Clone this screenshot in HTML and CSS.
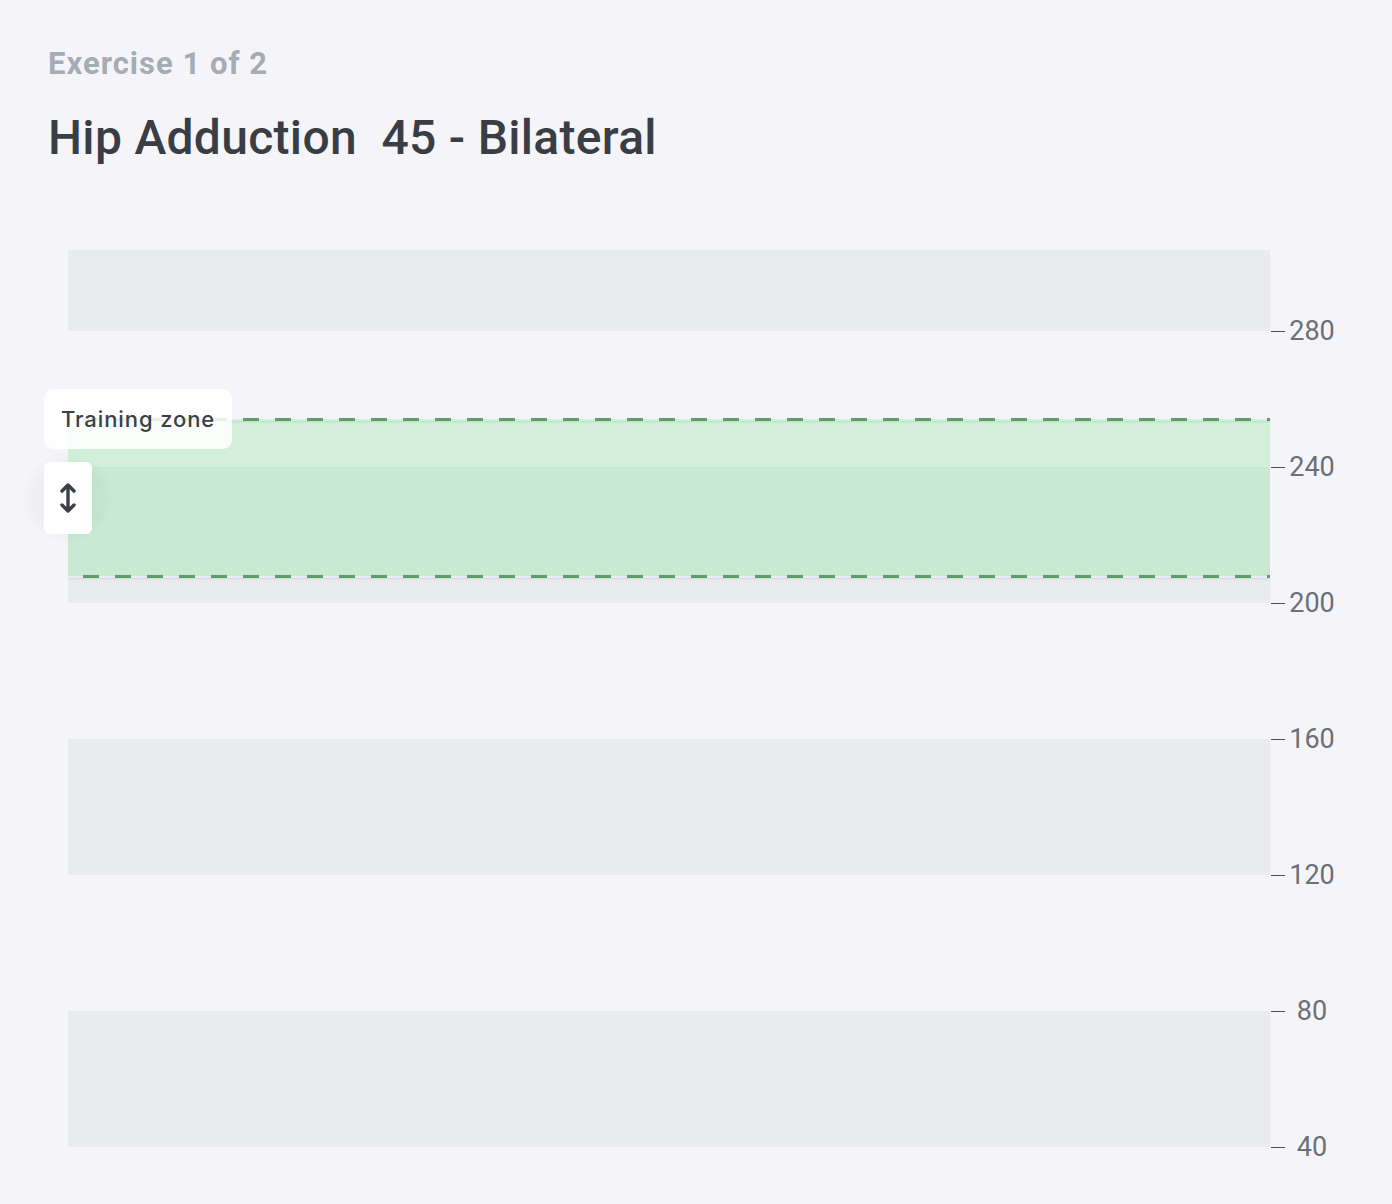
FILE: index.html
```html
<!DOCTYPE html>
<html lang="en">
<head>
<meta charset="utf-8">
<title>Hip Adduction 45 - Bilateral</title>
<link rel="stylesheet" href="styles.css">
</head>
<body>
<main class="page">
  <p class="eyebrow">Exercise 1 of 2</p>
  <h1 class="title">Hip Adduction&nbsp; 45 - Bilateral</h1>
  <section class="chart">
    <div class="plot">
      <div class="band band-gray band-top"></div>
      <div class="band band-light"></div>
      <div class="band band-gray"></div>
      <div class="band band-light"></div>
      <div class="band band-gray"></div>
      <div class="band band-light"></div>
      <div class="band band-gray"></div>

      <div class="zone">
        <div class="zone-line zone-line-top"></div>
        <div class="zone-line zone-line-bottom"></div>
      </div>
      <div class="handle-glow"></div>
      <div class="tooltip">Training zone</div>
      <div class="handle">
        <svg class="handle-icon" viewBox="0 0 18 32" width="18" height="32" aria-hidden="true">
          <path d="M9 3 V29 M3 9 L9 3 L15 9 M3 23 L9 29 L15 23" fill="none" stroke="#3a3f46" stroke-width="3.4" stroke-linecap="round" stroke-linejoin="round"/>
        </svg>
      </div>
    </div>
    <div class="axis">
      <div class="tick"><span class="tick-mark"></span><span class="tick-label">280</span></div>
      <div class="tick"><span class="tick-mark"></span><span class="tick-label">240</span></div>
      <div class="tick"><span class="tick-mark"></span><span class="tick-label">200</span></div>
      <div class="tick"><span class="tick-mark"></span><span class="tick-label">160</span></div>
      <div class="tick"><span class="tick-mark"></span><span class="tick-label">120</span></div>
      <div class="tick"><span class="tick-mark"></span><span class="tick-label">80</span></div>
      <div class="tick"><span class="tick-mark"></span><span class="tick-label">40</span></div>
    </div>
  </section>
</main>
</body>
</html>
```

FILE: styles.css
```css
* { box-sizing: border-box; }

html, body {
  margin: 0;
  padding: 0;
  background: #f5f5f9;
}

body {
  font-family: Roboto, "Liberation Sans", Arial, sans-serif;
  width: 1392px;
  height: 1204px;
  overflow: hidden;
}

.page {
  padding: 46px 0 0 48px;
}

.eyebrow {
  margin: 0;
  font-size: 31px;
  line-height: 36px;
  font-weight: 700;
  color: #a4acb4;
  letter-spacing: 1px;
}

.title {
  margin: 28px 0 0 0;
  font-size: 48px;
  line-height: 56px;
  font-weight: 500;
  color: #393e45;
  letter-spacing: 0.3px;
}

.chart {
  margin: 84px 0 0 20px;
  display: flex;
  align-items: flex-start;
}

.plot {
  position: relative;
  width: 1202px;
  display: flex;
  flex-direction: column;
}

.band { height: 136px; }
.band-top { height: 81px; }
.band-gray { background: #e8ecef; }
.band-light { background: transparent; }

.zone {
  position: absolute;
  left: 0;
  right: 0;
  top: 169px;
  height: 157px;
  background: rgba(109, 225, 125, 0.25);
}

.zone-line {
  position: absolute;
  left: 0;
  right: 0;
  height: 3px;
  background: repeating-linear-gradient(90deg, transparent 0 15px, #5e9d66 15px 31px, transparent 31px 32px);
  box-shadow: 0 1px 2px rgba(60, 70, 80, 0.12);
}
.zone-line-top { top: -1px; }
.zone-line-bottom { bottom: -2px; }

.tooltip {
  position: absolute;
  left: -24px;
  top: 139px;
  width: 188px;
  height: 60px;
  padding: 0 0 0 17px;
  display: flex;
  align-items: center;
  border-radius: 9px;
  background: rgba(255, 255, 255, 0.86);
  font-family: Inter, "Noto Sans", sans-serif;
  font-size: 22px;
  font-weight: 500;
  color: #3b4047;
  letter-spacing: 0.9px;
}

.handle-glow {
  position: absolute;
  left: -46px;
  top: 202px;
  width: 92px;
  height: 92px;
  border-radius: 50%;
  background: radial-gradient(closest-side, rgba(110, 120, 130, 0.07), rgba(110, 120, 130, 0.05) 75%, rgba(110, 120, 130, 0));
  pointer-events: none;
}

.handle {
  position: absolute;
  left: -24px;
  top: 212px;
  width: 48px;
  height: 72px;
  border-radius: 6px;
  background: #ffffff;
  display: flex;
  align-items: center;
  justify-content: center;
}

.axis {
  padding-top: 13px;
  display: flex;
  flex-direction: column;
}

.tick {
  height: 136px;
  display: flex;
  align-items: center;
}

.tick-mark {
  width: 14px;
  height: 1px;
  margin-left: 1px;
  background: #4a4f55;
}

.tick-label {
  width: 54px;
  margin-left: 0;
  text-align: center;
  font-size: 27px;
  color: #6b7077;
}
```
